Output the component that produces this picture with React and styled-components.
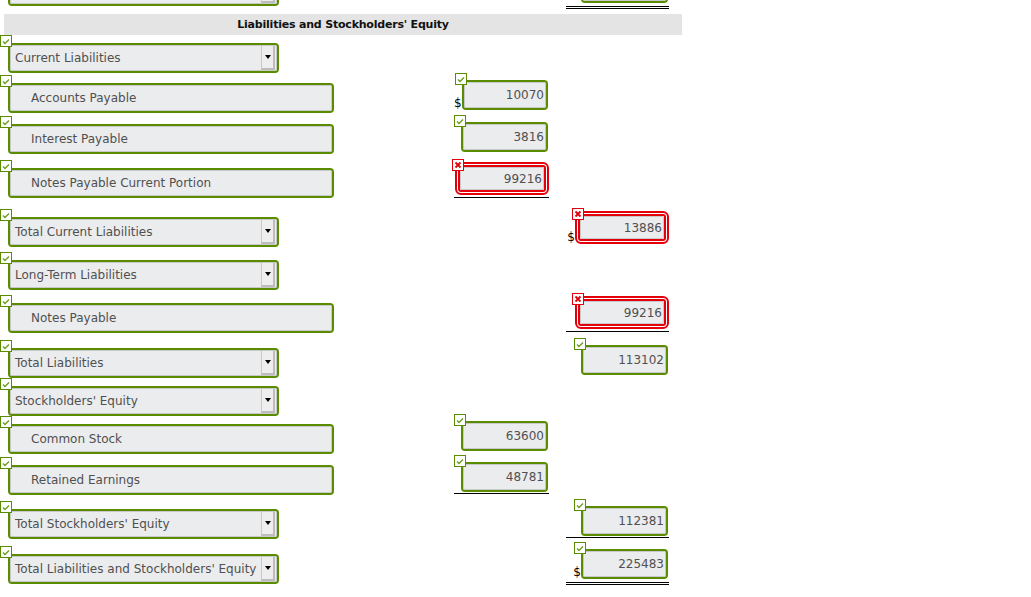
import React from 'react'
import styled, { createGlobalStyle } from 'styled-components'

const GREEN = '#5a8c00'
const RED = '#e3000b'

const GlobalStyle = createGlobalStyle`
    body {
        margin: 0;
        background: #fff;
        font-family: "DejaVu Sans", Verdana, sans-serif;
    }
`

const Sheet = styled.div`
    width: 1031px;
    height: 597px;
    overflow: hidden;
`

const Row = styled.div`
    display: grid;
    grid-template-columns: 454px 95px 17px 103px;
    align-items: start;
    height: ${p => p.$h}px;
    margin-top: ${p => p.$shift || 0}px;
`

const Header = styled.div`
    margin-left: 4px;
    width: 678px;
    height: 21px;
    line-height: 22px;
    background: #e4e4e4;
    text-align: center;
    font-size: 11px;
    font-weight: bold;
    letter-spacing: -0.2px;
    color: #111;
`

const LabelCell = styled.div`
    grid-column: 1;
    padding: 8px 0 0 8px;
`

// offsets are measured from the field's padding box (inside its 2px border)
const Marker = styled.span`
    position: absolute;
    top: ${p => p.$top}px;
    left: ${p => p.$left}px;
    width: 12px;
    height: 12px;
    box-sizing: border-box;
    background: #fff;
    border: 1px solid ${p => (p.$wrong ? RED : GREEN)};
    display: flex;
    align-items: center;
    justify-content: center;
    z-index: 2;
`

const Box = styled.div`
    position: relative;
    box-sizing: border-box;
    width: ${p => p.$w}px;
    height: ${p => p.$h}px;
    border: 2px solid ${p => (p.$wrong ? RED : GREEN)};
    border-radius: ${p => (p.$wrong ? 3 : 4)}px;
    background: #fff;
`

const Inner = styled.div`
    box-sizing: border-box;
    height: 100%;
    border: 1px solid #c9c9c9;
    border-radius: 2px;
    background: #ebecee;
    display: flex;
    align-items: center;
    justify-content: ${p => (p.$num ? 'flex-end' : 'flex-start')};
    padding: 0 ${p => (p.$num ? 1 : 0)}px 0 ${p => p.$pad || 0}px;
    font-size: 12px;
    color: #505050;
    white-space: nowrap;
`

const DropButton = styled.span`
    align-self: stretch;
    box-sizing: border-box;
    width: 14px;
    margin: 0 1px 0 auto;
    background: #eeeeee;
    border-left: 1px solid #c8c8c8;
    border-right: 2px solid #bdbdbd;
    border-bottom: 2px solid #bdbdbd;
    display: flex;
    align-items: center;
    justify-content: center;
    &::after {
        content: '';
        border-top: 4px solid #000;
        border-left: 3px solid transparent;
        border-right: 3px solid transparent;
    }
`

const Ring = styled.div`
    position: relative;
    border: 2px solid ${RED};
    padding: 1px;
    border-radius: 6px;
    background: #fff;
`

const AmountCell = styled.div`
    grid-column: ${p => (p.$col === 'b' ? 4 : 2)};
    margin-top: ${p => p.$top}px;
    display: flex;
    justify-content: flex-end;
    align-items: flex-end;
    padding-top: ${p => (p.$wrong ? 3 : 7)}px;
    padding-right: ${p => (p.$wrong ? 0 : 1)}px;
    padding-bottom: ${p => (p.$line === 'double' ? 3 : p.$wrong ? 2 : 1)}px;
    border-bottom: ${p => (p.$line === 'double' ? '3px double #000' : p.$line === 'single' ? '1px solid #000' : '1px solid transparent')};
`

const Dollar = styled.span`
    font-size: 12px;
    line-height: 13px;
    color: #000;
`

const Check = () => (
    <svg width="8" height="7" viewBox="0 0 8 7">
        <path d="M1 3.5 L3 5.5 L7 1.5" fill="none" stroke="#6b9e1f" strokeWidth="1.4" />
    </svg>
)

const Cross = () => (
    <svg width="8" height="8" viewBox="0 0 8 8">
        <path d="M1.5 1.5 L6.5 6.5 M6.5 1.5 L1.5 6.5" fill="none" stroke={RED} strokeWidth="1.8" />
    </svg>
)

const LabelField = ({ kind, label }) => (
    <Box $w={kind === 'select' ? 271 : 326} $h={30}>
        <Marker $top={-10} $left={-10}><Check /></Marker>
        <Inner $pad={kind === 'select' ? 4 : 20}>
            {label}
            {kind === 'select' && <DropButton />}
        </Inner>
    </Box>
)

const Amount = ({ col, value, wrong, dollar, line, top }) => (
    <AmountCell $col={col} $wrong={wrong} $line={line} $top={top}>
        {dollar && <Dollar>$</Dollar>}
        {wrong ? (
            <Ring>
                <Marker $wrong $top={-5} $left={-5}><Cross /></Marker>
                <Box $wrong $w={88} $h={27}>
                    <Inner $num>{value}</Inner>
                </Box>
            </Ring>
        ) : (
            <Box $w={87} $h={30}>
                <Marker $top={-9} $left={-9}><Check /></Marker>
                <Inner $num>{value}</Inner>
            </Box>
        )}
    </AmountCell>
)

const rows = [
    { kind: 'select', label: 'Current Liabilities', h: 40 },
    { kind: 'text', label: 'Accounts Payable', h: 41, amount: { col: 'a', value: '10070', dollar: true, top: -2 } },
    { kind: 'text', label: 'Interest Payable', h: 44, amount: { col: 'a', value: '3816', top: -1 } },
    { kind: 'text', label: 'Notes Payable Current Portion', h: 49, amount: { col: 'a', value: '99216', wrong: true, line: 'single', top: -1 } },
    { kind: 'select', label: 'Total Current Liabilities', h: 43, amount: { col: 'b', value: '13886', wrong: true, dollar: true, top: -1 } },
    { kind: 'select', label: 'Long-Term Liabilities', h: 43 },
    { kind: 'text', label: 'Notes Payable', h: 45, amount: { col: 'b', value: '99216', wrong: true, line: 'single', top: -2 } },
    { kind: 'select', label: 'Total Liabilities', h: 38, amount: { col: 'b', value: '113102', top: -2 } },
    { kind: 'select', label: "Stockholders' Equity", h: 38 },
    { kind: 'text', label: 'Common Stock', h: 41, amount: { col: 'a', value: '63600', top: -2 } },
    { kind: 'text', label: 'Retained Earnings', h: 44, amount: { col: 'a', value: '48781', line: 'single', top: -2 } },
    { kind: 'select', label: "Total Stockholders' Equity", h: 45, amount: { col: 'b', value: '112381', line: 'single', top: -2 } },
    { kind: 'select', label: "Total Liabilities and Stockholders' Equity", h: 45, amount: { col: 'b', value: '225483', dollar: true, line: 'double', top: -4 } },
]

export default function App() {
    return (
        <Sheet>
            <GlobalStyle />
            {/* bottom edge of the assets section, cut off by the top of the page */}
            <Row $h={46} $shift={-32}>
                <LabelCell><LabelField kind="select" label="" /></LabelCell>
                <Amount col="b" value="" line="double" top={-2} />
            </Row>
            <Header>Liabilities and Stockholders' Equity</Header>
            {rows.map(r => (
                <Row key={r.label} $h={r.h}>
                    <LabelCell><LabelField kind={r.kind} label={r.label} /></LabelCell>
                    {r.amount && <Amount {...r.amount} />}
                </Row>
            ))}
        </Sheet>
    )
}
